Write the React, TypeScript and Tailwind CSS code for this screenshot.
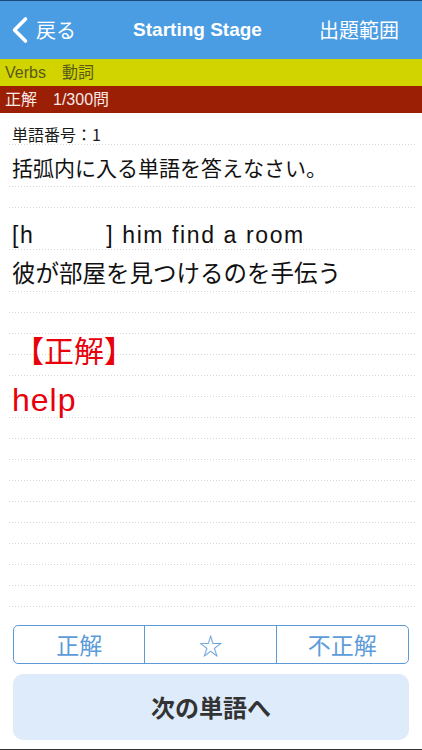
import React from 'react';

const jp = "font-['Noto_Sans_CJK_JP','Liberation_Sans',sans-serif]";
const en = "font-['Liberation_Sans','Noto_Sans_CJK_JP',sans-serif]";

const NavBar = () => (
  <header className="h-[58px] bg-[#4a9ce3] flex items-center justify-between pl-[11px] pr-[23px] text-white">
    <div className="flex items-center gap-[7px]">
      <svg width="18" height="28" viewBox="0 0 18 28" className="text-white">
        <polyline
          points="14.5,3 3.5,14 14.5,25"
          fill="none"
          stroke="currentColor"
          strokeWidth="3.6"
          strokeLinecap="round"
          strokeLinejoin="round"
        />
      </svg>
      <span className={`${jp} text-[20px] leading-[20px]`}>戻る</span>
    </div>
    <h1 className={`${en} text-[19px] leading-[20px] font-bold`}>Starting Stage</h1>
    <span className={`${jp} text-[20px] leading-[20px]`}>出題範囲</span>
  </header>
);

const StatusBars = () => (
  <>
    <div className={`${en} h-[27px] bg-[#d2d400] flex items-center pl-[5px] text-[16px] leading-[16px] text-[#585a1c]`}>
      Verbs　動詞
    </div>
    <div className={`${en} h-[27px] bg-[#9a1f05] flex items-center pl-[5px] text-[16px] leading-[16px] text-[#f6e9e6]`}>
      正解　1/300問
    </div>
  </>
);

// ruled notebook area: dotted rule every 21px
const QuestionCard = () => (
  <div className="h-[500px] mx-[7px] flex flex-col bg-white bg-[linear-gradient(to_right,#fff_2px,transparent_2px),linear-gradient(to_bottom,transparent_10px,#d6d6d6_10px,#d6d6d6_11px,transparent_11px)] [background-size:3px_100%,100%_21px]">
    <div className={`${jp} h-[31px] bg-white pl-[5px] pt-[13px] text-[16px] leading-[16px] text-[#1a1a1a]`}>
      単語番号：1
    </div>
    <div className={`${jp} mt-px h-[41px] bg-white pl-[5px] pt-[12px] text-[21px] leading-[21px] text-[#111]`}>
      括弧内に入る単語を答えなさい。
    </div>
    <div className="h-[22px]" />
    <div className={`${en} h-[41px] bg-white pl-[5px] pt-[16px] text-[23px] leading-[23px] tracking-[1.6px] text-[#111] whitespace-pre`}>
      {'[h         ] him find a room'}
    </div>
    <div className={`${jp} mt-px h-[41px] bg-white pl-[5px] pt-[11px] text-[23.5px] leading-[23.5px] text-[#111]`}>
      彼が部屋を見つけるのを手伝う
    </div>
    <div className={`${jp} mt-[43px] pl-[7px] text-[30px] leading-[30px] text-[#e8000b]`}>【正解】</div>
    <div className={`${en} mt-[20px] pl-[5px] text-[32px] leading-[32px] tracking-[1px] text-[#e8000b]`}>help</div>
  </div>
);

const AnswerButtons = () => (
  <div className="px-[13px] pt-[12px] pb-[9px] flex flex-col gap-[10px]">
    <div className={`${jp} h-[39px] grid grid-cols-3 border border-[#5b9ad7] rounded-[5px] divide-x divide-[#5b9ad7] text-[#5c9bd9] text-[23px] leading-[23px]`}>
      <button className="flex items-center justify-center">正解</button>
      <button className="flex items-center justify-center text-[24px]">☆</button>
      <button className="flex items-center justify-center">不正解</button>
    </div>
    <button className={`${jp} h-[66px] rounded-[10px] bg-[#deebfb] text-[#333] text-[24px] leading-[24px] font-bold flex items-center justify-center`}>
      次の単語へ
    </button>
  </div>
);

const App = () => {
  return (
    <div className="w-[422px] h-[750px] bg-white flex flex-col overflow-hidden">
      <div className="h-px bg-[#1d4a78]" />
      <NavBar />
      <StatusBars />
      <QuestionCard />
      <AnswerButtons />
      <div className="h-px bg-[#333]" />
    </div>
  );
};

export default App;
